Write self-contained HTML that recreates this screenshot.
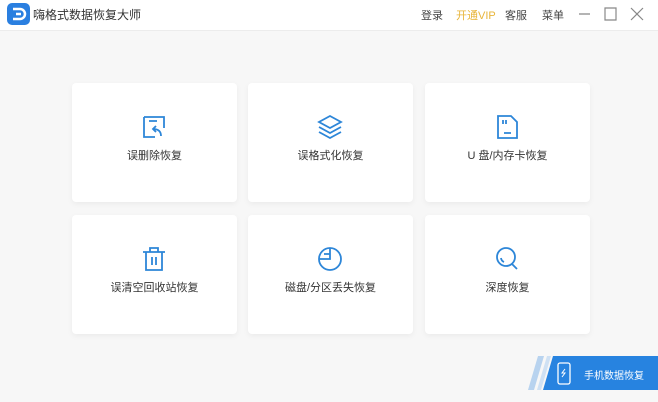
<!DOCTYPE html>
<html><head><meta charset="utf-8"><style>
*{margin:0;padding:0;box-sizing:border-box}
body{width:658px;height:402px;overflow:hidden;background:#f7f7f7;font-family:"Liberation Sans","Noto Sans CJK SC",sans-serif;position:relative}
.hd{position:absolute;left:0;top:0;width:658px;height:31px;background:#fff;border-bottom:1px solid #ececec}
.logo{position:absolute;left:7px;top:3px;width:23px;height:22px;border-radius:5px;background:#2a7fe0}
.title{position:absolute;left:33px;top:6px;font-size:12px;color:#333}
.nav{position:absolute;top:7px;font-size:11px;color:#444}
.card{position:absolute;width:165px;height:119px;background:#fff;border-radius:4px;box-shadow:0 2px 6px rgba(0,0,0,.05)}
.card svg{position:absolute;left:69px;top:31px}
.card div{position:absolute;left:0;right:0;top:64px;text-align:center;font-size:11px;color:#333}
</style></head><body>
<div class="hd">
<div class="logo"><svg width="23" height="22" viewBox="0 0 23 22"><path d="M6 6h7a5 5 0 010 10H6M9 11h5" stroke="#fff" stroke-width="2.5" fill="none"/></svg></div>
<div class="title">嗨格式数据恢复大师</div>
<div class="nav" style="left:421px">登录</div>
<div class="nav" style="left:456px;color:#e8b53a">开通VIP</div>
<div class="nav" style="left:505px">客服</div>
<div class="nav" style="left:542px">菜单</div>
<svg style="position:absolute;left:575px;top:6px" width="75" height="16"><path d="M4 8h11M30 2h11v12H30zM56 2l12 12M68 2L56 14" stroke="#888" stroke-width="1.2" fill="none"/></svg>
</div>
<div class="card" style="left:72px;top:83px"><svg width="26" height="26" viewBox="0 0 26 26" fill="none" stroke="#2d86d8" stroke-width="1.8"><path d="M3 3h20v11M3 3v20h11M8 7h8M20 22c0-5-3-7-8-7M15 12l-3 3 3 3"/></svg><div>误删除恢复</div></div>
<div class="card" style="left:248px;top:83px"><svg width="26" height="26" viewBox="0 0 26 26" fill="none" stroke="#2d86d8" stroke-width="1.8"><path d="M13 2l11 6-11 6-11-6zM2 13l11 6 11-6M2 18l11 6 11-6"/></svg><div>误格式化恢复</div></div>
<div class="card" style="left:425px;top:83px"><svg width="26" height="26" viewBox="0 0 26 26" fill="none" stroke="#2d86d8" stroke-width="1.8"><path d="M4 2h13l6 6v16H4zM9 6v4M12 6v4M10 19h7"/></svg><div>U 盘/内存卡恢复</div></div>
<div class="card" style="left:72px;top:215px"><svg width="26" height="26" viewBox="0 0 26 26" fill="none" stroke="#2d86d8" stroke-width="1.8"><path d="M2 6h22M9 6V2h8v4M5 6v18h16V6M11 11v8M15 11v8"/></svg><div>误清空回收站恢复</div></div>
<div class="card" style="left:248px;top:215px"><svg width="26" height="26" viewBox="0 0 26 26" fill="none" stroke="#2d86d8" stroke-width="1.8"><circle cx="13" cy="13" r="11"/><path d="M13 2v11H2M7 8h6"/></svg><div>磁盘/分区丢失恢复</div></div>
<div class="card" style="left:425px;top:215px"><svg width="26" height="26" viewBox="0 0 26 26" fill="none" stroke="#2d86d8" stroke-width="1.8"><circle cx="12" cy="11" r="9"/><path d="M18 18l5 5M7 12a5 5 0 003 4"/></svg><div>深度恢复</div></div>
<svg style="position:absolute;left:518px;top:356px" width="140" height="34"><path d="M10 34L20 0h6L16 34z" fill="#b8d3ef"/><path d="M19 34L29 0h4L23 34z" fill="#cfe1f4"/><path d="M25 34L35 0h105v34z" fill="#2783e0"/><rect x="40" y="7" width="12" height="21" rx="2" fill="none" stroke="#fff" stroke-width="1.3"/><path d="M47 13l-3 4h3l-3 4" stroke="#fff" fill="none"/></svg>
<div style="position:absolute;left:584px;top:367px;font-size:10px;color:#fff">手机数据恢复</div>
</body></html>
